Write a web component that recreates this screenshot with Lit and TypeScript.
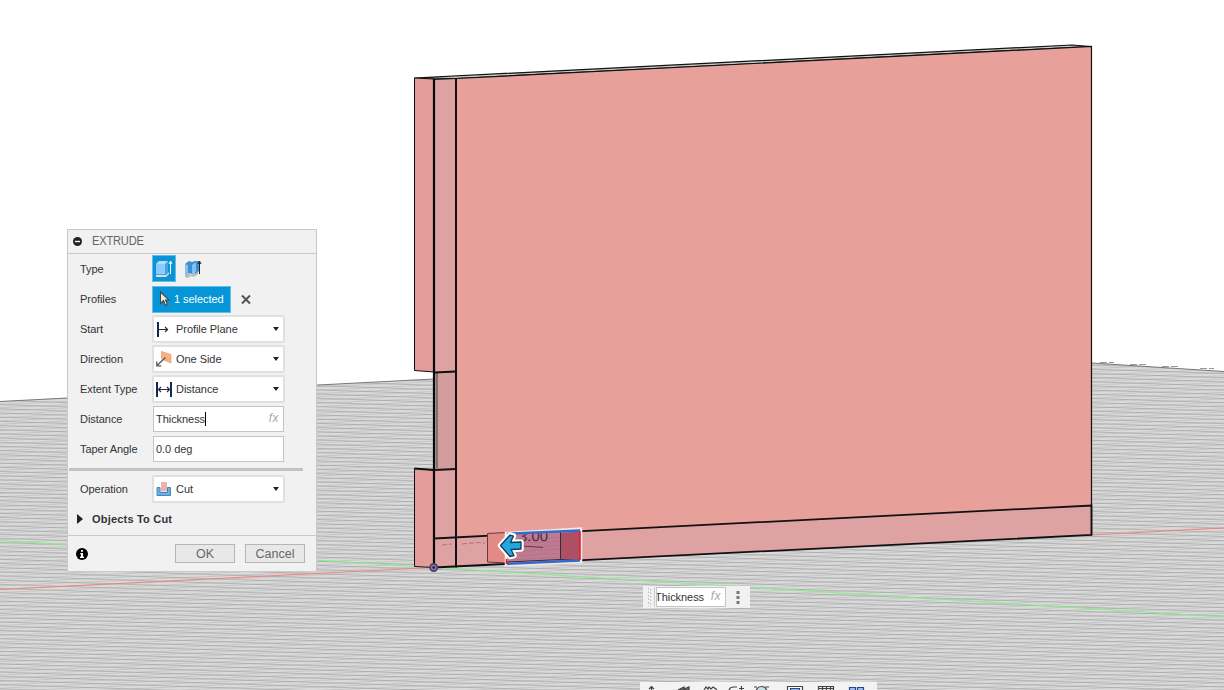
import { LitElement, html, css, svg } from "lit";
import { customElement, property } from "lit/decorators.js";

const icons: Record<string, unknown> = {
  plane: svg`<path d="M2 1v15" stroke="#102a56" stroke-width="2"/><path d="M3 8.500h8.500M9 6l2.500 2.500L9 11" fill="none" stroke="#222c3c" stroke-width="1.200"/>`,
  side: svg`<path d="M5.500 .500l9.500 3v8.500l-9.500-4z" fill="#f5b183" stroke="#e89a68" stroke-width=".7"/><path d="M9.500 6.500L1 14.500M.800 10.500v4.300h4.500" fill="none" stroke="#5a5a5a" stroke-width="1.300"/>`,
  dist: svg`<path d="M1 1v15M15 1v15" stroke="#102a56" stroke-width="2"/><path d="M2.500 8.500h11M5 6L2.500 8.500 5 11M11 6l2.500 2.500L11 11" fill="none" stroke="#222c3c" stroke-width="1.200"/>`,
  cut: svg`<path d="M1 6.500h3v5h7.500v-5h3v8H1z" fill="#6ab1e6" stroke="#4388bc"/><path d="M5 1h6v9.500h-6z" fill="#efb0b0"/>`,
};

@customElement("select-box")
class SelectBox extends LitElement {
  @property() icon = "plane";
  @property() label = "";
  static styles = css`
    :host { display: flex; box-sizing: border-box; width: 133px; height: 28px; border: 2px solid #e0e0e0; background: #fff; align-items: center; padding: 0 4px 0 2px; border-radius: 2px; }
    .icon { width: 17px; height: 17px; flex: none; }
    .label { flex: 1; padding-left: 3px; white-space: nowrap; }
    .arrow { width: 6px; height: 4px; }
  `;
  render() {
    return html`<svg class="icon" viewBox="0 0 17 17">${icons[this.icon]}</svg>
      <span class="label">${this.label}</span>
      <svg class="arrow" viewBox="0 0 6 4"><path d="M0 0h6L3 4z" fill="#222"/></svg>`;
  }
}

@customElement("model-scene")
class ModelScene extends LitElement {
  static styles = css`
    :host { display: block; width: 1224px; height: 690px; }
    svg { display: block; }
    .dim { font: 15px "Liberation Sans", Arial, sans-serif; }
  `;
  render() {
    const grid: unknown[] = [];
    for (let y = 345; y < 770; y += 4.18) {
      grid.push(svg`<path d="M0 ${y - 24}L1224 ${y + 16}" stroke="#8c8c8c" stroke-width=".8" stroke-opacity=".6"/>`);
    }
    for (let y = 350; y < 790; y += 3.3) {
      grid.push(svg`<path d="M0 ${y + 28}L1224 ${y - 27}" stroke="#a0a0a0" stroke-width="1" stroke-opacity=".35"/>`);
    }
    return html`<svg width="1224" height="690" viewBox="0 0 1224 690">
      <defs><clipPath id="floor"><path d="M0 401.500L434 379 900 352 1092 363 1224 371.500V690H0z"/></clipPath></defs>
      <rect width="1224" height="690" fill="#fff"/>
      <g clip-path="url(#floor)"><rect width="1224" height="690" fill="#dadada"/>${grid}</g>
      <path d="M0 401.500L434 379M1092 363L1224 371.500" fill="none" stroke="#777"/>
      <path d="M1100 362.500h14M1130 364.500h18M1162 366.500h18M1200 368.500h14" stroke="#999" stroke-dasharray="7 2"/>
      <path d="M0 540.500L434 567.500 1224 617" fill="none" stroke="#83ef83"/>
      <path d="M0 589.500L434 567.500M1091 535L1224 528" stroke="#f08080"/>
      <path d="M414.500 78L1072 45l19 1.500L456 78.500z" fill="#c9c9c7" stroke="#111" stroke-width="1.200"/>
      <path d="M414.500 78L434 79v293l-19.500-1.500zM414.500 468.500L434 470v97.500l-19.500-1z" fill="#e39c99" stroke="#111"/>
      <path d="M434 79.500l22-1v489l-22 .500z" fill="#dfa2a3"/>
      <path d="M434 372.500h3v96h-3z" fill="#a9a0a2"/><path d="M437 372h19v96.500h-19z" fill="#d39d9d"/>
      <path d="M456 78.500L1091.500 46.500V505.500L456 537z" fill="#e8a09a"/>
      <path d="M456 537L1091.500 505.500V534.500L456 567z" fill="#dfa2a3"/>
      <path d="M437 372v96" stroke="#444" stroke-width="1"/>
      <path d="M434 79.500L456 78.500 1091.500 46.500V535" fill="none" stroke="#111" stroke-width="1.200"/>
      <path d="M434 79v488.500" stroke="#090909" stroke-width="2.200"/><path d="M456 78v489.500" stroke="#090909" stroke-width="1.900"/>
      <path d="M434 372.500l22-1M414.500 468.500l19.500 1.500 22-1M434 538.500L1091.500 505.500v29.500L434 567.500" fill="none" stroke="#111" stroke-width="1.800"/>
      <path d="M442 545l10-1M462 544l15-1.500 8 .5" stroke="#a97478" stroke-dasharray="5 2" fill="none"/>
      <path d="M487.500 533.500L507 532.500v30.500l-19.500-1z" fill="#e28b86" stroke="#6b3838"/>
      <path d="M506 533L581 528.500V562L506 565.500z" fill="#c07b91" stroke="#f5e8e8" stroke-width="2.500"/>
      <path d="M508 540l52-2.600M508 544l52-2.600M508 548l52-2.600M508 552l52-2.600M508 556l52-2.600M508 560l52-2.600" stroke="#8d6682" stroke-width=".7" opacity=".4"/>
      <path d="M561 533l19-1.500V560l-19-1z" fill="#ad5064"/><path d="M560.500 532v27.500M507 562l53.500-2.500 19.500 1" fill="none" stroke="#332b40"/>
      <clipPath id="lbl"><path d="M507 534L580 530.500V565H507z"/></clipPath><text class="dim" clip-path="url(#lbl)" x="519" y="541.500" transform="rotate(-1 519 542)" fill="#512d43">3.00</text>
      <path d="M523 546l20 1.500" stroke="#633849"/>
      <path d="M507 533.800L580 530.500M507 564L580 560.500" stroke="#326ccb" stroke-width="2.300"/>
      <path d="M580 531v29M506.500 559v5" stroke="#f01620" stroke-width="1.500"/>
      <path d="M500.500 545.500L510 535l3.500 1-3 6.500 10.500-.500v7l-10 .500 3 6-4 1z" fill="#fff" stroke="#fff" stroke-width="5.500" stroke-linejoin="round"/>
      <path d="M500.500 545.500L510 535l3.500 1-3 6.500 10.500-.500v7l-10 .500 3 6-4 1z" fill="#22a7e2" stroke="#123d52" stroke-width="1.300" stroke-linejoin="round"/>
      <circle cx="433.700" cy="567.500" r="3.700" fill="#8270a8" stroke="#493b68" stroke-width="1.500"/><circle cx="433.700" cy="567.500" r="1.200" fill="#1d182a"/>
    </svg>`;
  }
}

@customElement("app-root")
class AppRoot extends LitElement {
  static styles = css`
    :host { display: block; position: relative; width: 1224px; height: 690px; overflow: hidden; font: 11px/14px "Liberation Sans", Arial, sans-serif; color: #333; letter-spacing: -.05px; }
    * { box-sizing: border-box; }
    .panel { position: absolute; left: 67px; top: 229px; width: 250px; height: 343px; background: #f1f1f1; border: 1px solid #c9c9c9; display: flex; flex-direction: column; }
    .head { height: 24px; border-bottom: 1px solid #c9c9c9; display: flex; align-items: center; gap: 10px; padding: 0 5px 1px; color: #666; flex: none; }
    .head span { letter-spacing: -.85px; font-size: 12px; display: inline-block; transform: scaleX(.93); transform-origin: left; letter-spacing: -.25px; }
    .row { display: flex; align-items: center; height: 30px; padding-left: 12px; flex: none; }
    .name { width: 72px; white-space: nowrap; }
    .type { width: 24px; height: 27px; background: #0696d7; border: 1px solid #65bde6; margin-bottom: 1px; }
    .type svg, .thin svg { display: block; }
    .thin { margin: 0 0 2px 8px; }
    .chosen { width: 79px; height: 27px; background: #0696d7; border: 1px solid #65bde6; color: #fff; display: flex; align-items: center; gap: 4px; padding-left: 6px; white-space: nowrap; }
    .clear { margin-left: 10px; }
    .input { width: 131px; height: 26px; margin-left: 1px; border: 1px solid #c4c4c4; background: #fff; padding: 0 4px 0 2px; display: flex; align-items: center; }
    .caret { width: 1px; height: 14px; background: #000; }
    .fx { margin-left: auto; font: italic 12px/14px "Liberation Sans", Arial, sans-serif; color: #aaa; letter-spacing: .5px; padding-bottom: 2px; }
    .rule { width: 234px; height: 3px; background: #c2c2c2; margin: 4px 0 3px 1px; flex: none; }
    .group { display: flex; align-items: center; height: 31px; padding: 0 0 2px 9px; gap: 9px; font-weight: bold; letter-spacing: .2px; }
    .foot { flex: 1; border-top: 1px solid #c9c9c9; display: flex; align-items: center; padding: 0 11px 0 8px; }
    .btn { width: 60px; height: 19px; border: 1px solid #b5b5b5; background: #e8e8e8; color: #666; font-size: 12.500px; letter-spacing: 0; display: grid; place-items: center; margin-left: 10px; }
    .info { margin-right: auto; }
    .float { position: absolute; left: 643px; top: 586px; width: 107px; height: 22px; background: #f1f1f1; display: flex; align-items: center; }
    .grip { width: 13px; height: 22px; flex: none; }
    .mini { width: 70px; height: 20px; border: 1px solid #c4c4c4; background: #fff; display: flex; align-items: center; overflow: hidden; padding-right: 4px; }
    .mini .txt { margin-left: -2px; }
    .dots { margin-left: 10px; margin-bottom: 1px; }
    .nav { position: absolute; left: 640px; top: 682px; width: 237px; height: 8px; background: #f3f3f3; overflow: hidden; }
    .nav svg { display: block; }
  `;
  render() {
    return html`<model-scene></model-scene>
      <section class="panel">
        <header class="head"><svg width="9" height="9" viewBox="0 0 9 9"><circle cx="4.500" cy="4.500" r="4.500" fill="#222"/><path d="M2 4.500h5" stroke="#fff" stroke-width="1.400"/></svg><span>EXTRUDE</span></header>
        <div class="row"><span class="name">Type</span>
          <div class="type"><svg width="22" height="25" viewBox="0 0 22 25"><path d="M3 17l3 2h7l3-3v2l-3 3H3z" fill="#ddd"/><path d="M3 8l3-3h9v12l-3 2H3z" fill="#4aa3e8"/><path d="M3 8h9v10H3z" fill="#8bcbff"/><path d="M3 8l3-3h9l-3 3z" fill="#b4deff"/><path d="M17.500 18V6M16 8l1.500-3L19 8" fill="none" stroke="#fff"/></svg></div>
          <div class="thin"><svg width="20" height="25" viewBox="0 0 20 25"><path d="M1 18l3-1 3 2 7-4v3l-4 3-3-1-3 2-3-1z" fill="#bbb"/><path d="M1 8l4-3 3 1 3-1h4v10l-4 3V9L8 10v8l-4-1-3 2z" fill="#3d8fd1"/><path d="M1 8l3 1v9l-3 1zM8 9l4-3v10l-4 3z" fill="#82c0f3"/><path d="M15.500 18V6M14 8l1.500-3L17 8" fill="none" stroke="#222"/></svg></div>
        </div>
        <div class="row"><span class="name">Profiles</span>
          <div class="chosen"><svg width="11" height="16" viewBox="0 0 11 16"><path d="M1.500 1v11.500l3-3 2 5 2-1-2-4.500H10z" fill="#eee" stroke="#444" stroke-width="1.100"/></svg><span>1 selected</span></div>
          <svg class="clear" width="11" height="11" viewBox="0 0 11 11"><path d="M1 1.500l8 8M9 1.500l-8 8" stroke="#555" stroke-width="2"/></svg>
        </div>
        <div class="row"><span class="name">Start</span><select-box icon="plane" label="Profile Plane"></select-box></div>
        <div class="row"><span class="name">Direction</span><select-box icon="side" label="One Side"></select-box></div>
        <div class="row"><span class="name">Extent Type</span><select-box icon="dist" label="Distance"></select-box></div>
        <div class="row"><span class="name">Distance</span><div class="input"><span>Thickness</span><i class="caret"></i><span class="fx">fx</span></div></div>
        <div class="row"><span class="name">Taper Angle</span><div class="input">0.0 deg</div></div>
        <div class="rule"></div>
        <div class="row"><span class="name">Operation</span><select-box icon="cut" label="Cut"></select-box></div>
        <div class="group"><svg width="6" height="10" viewBox="0 0 6 10"><path d="M0 0l6 5-6 5z" fill="#222"/></svg><span>Objects To Cut</span></div>
        <footer class="foot"><svg class="info" width="12" height="12" viewBox="0 0 12 12"><circle cx="6" cy="6" r="6" fill="#000"/><path d="M5 2h2v1.700H5zM4.300 5H7v3.500h1V10H4V8.500h1V6.300h-.7z" fill="#fff"/></svg><div class="btn">OK</div><div class="btn">Cancel</div></footer>
      </section>
      <div class="float">
        <svg class="grip" viewBox="0 0 13 22"><path d="M5.500 2v18M7.500 3v18" stroke="#bbb" stroke-dasharray="1.500 2"/><path d="M11.500 1v20" stroke="#ccc"/></svg>
        <div class="mini"><span class="txt">Thickness</span><span class="fx">fx</span></div>
        <svg class="dots" width="4" height="14" viewBox="0 0 4 14"><path d="M.500 1h3v3h-3zM.500 6h3v3h-3zM.500 11h3v3h-3z" fill="#777"/></svg>
      </div>
      <div class="nav"><svg width="237" height="8" viewBox="0 0 237 8" fill="none" stroke="#444" stroke-width="1.200">
        <path d="M9 7l2.500-2.500L14 7M11.500 5v3"/><path d="M38 8l6-3v2l5-2v3z" fill="#777"/><path d="M64 8l2-3 2 2 1-2 2 2 2-2 3 2 1 2M89 8q1-3 5-3h3M101.500 4v5M99 6.500h5M114 5h3M125 5h4"/>
        <circle cx="121.500" cy="10" r="5.500" fill="#c6e4e8"/><path d="M147.500 9V4.500h15V9" fill="#fff"/><path d="M150.500 9V6.500h9V9" fill="#9cbcf0" stroke="#294986"/><path d="M178.500 9V4.500h15V9M178 6.500h16M182.500 4v4M186.500 4v4M190.500 4v4"/><path d="M209.500 9V5.500h6V9M217.500 9V5.500h6V9" fill="#9cbcf0" stroke="#294986"/></svg></div>`;
  }
}
